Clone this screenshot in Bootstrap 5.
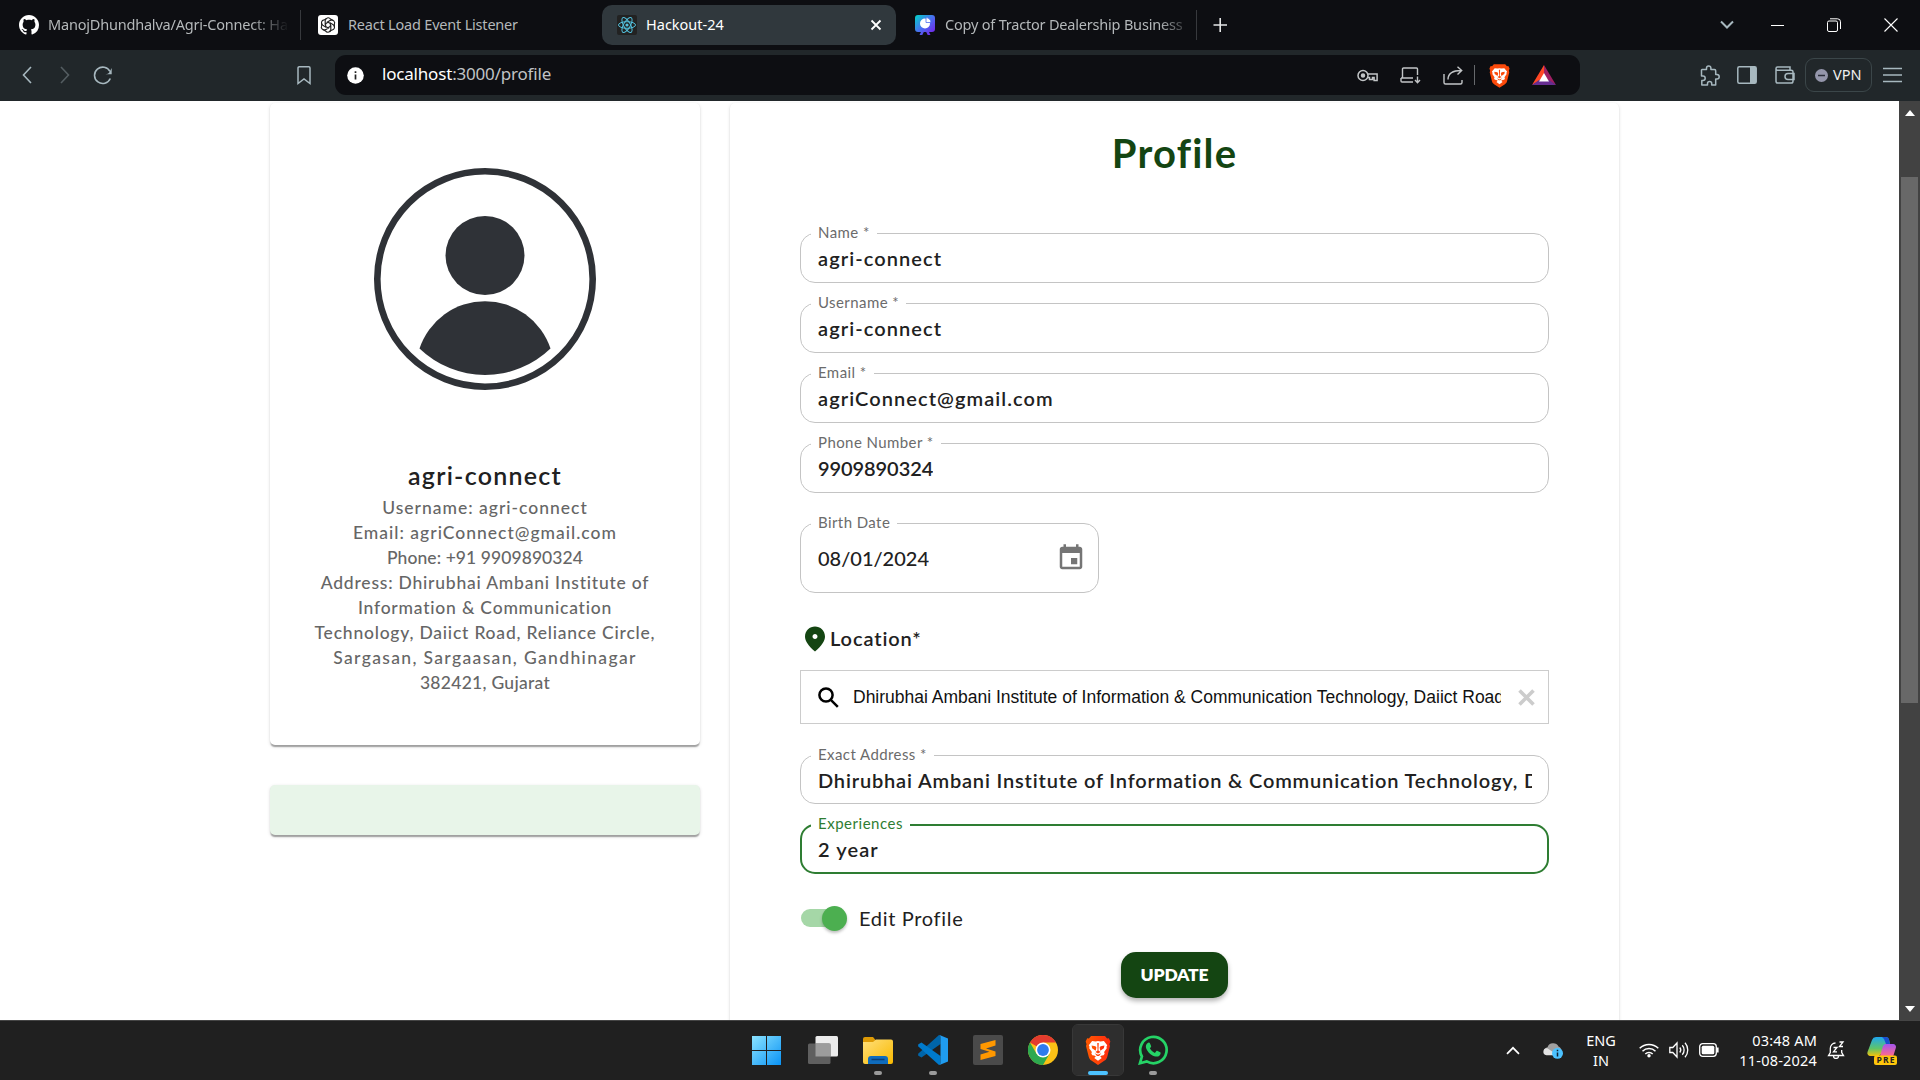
<!DOCTYPE html>
<html lang="en">
<head>
<meta charset="utf-8">
<meta name="viewport" content="width=device-width, initial-scale=1">
<title>Hackout-24</title>
<link href="https://cdn.jsdelivr.net/npm/bootstrap@5.3.0/dist/css/bootstrap.min.css" rel="stylesheet">
<style>
  html, body { height: 100%; overflow: hidden; }
  body { background: #fff; font-family: "Noto Sans", sans-serif; color: #212121; }
  svg { display: block; flex: none; }
  .screen { width: 1920px; height: 1080px; }

  /* browser chrome */
  .tabstrip { height: 50px; background: #0d0e12; padding-left: 9px; font-size: 14.5px; color: #b4b8ba; letter-spacing: -.2px; }
  .tab-item { height: 40px; width: 294px; padding: 0 10px; }
  .tab-item.first { width: 291px; }
  .tab-item.last { width: 300px; padding-left: 19px; }
  .tab-item.current { background: #30383d; border-radius: 10px; color: #fff; padding-left: 15px; margin-left: 7px; letter-spacing: 0; }
  .tab-title { overflow: hidden; white-space: nowrap; margin-left: 9px; }
  .tab-title.faded { width: 241px; -webkit-mask-image: linear-gradient(90deg, #000 84%, transparent); mask-image: linear-gradient(90deg, #000 84%, transparent); }
  .last .tab-title.faded { width: 238px; margin-left: 10px; -webkit-mask-image: linear-gradient(90deg, #000 90%, rgba(0,0,0,.3)); mask-image: linear-gradient(90deg, #000 90%, rgba(0,0,0,.3)); }
  .tab-rule { width: 1px; height: 30px; background: #37393d; }
  .win-btns { padding-right: 1px; }
  .win-btn { width: 56.5px; height: 48px; }
  .win-btn.narrow { width: 46px; }
  .toolbar-row { height: 51px; background: #21272a; padding-bottom: 1px; }
  .tool-btn { width: 38px; height: 40px; }
  .omnibox { width: 1245px; height: 40px; background: #0d0e12; border-radius: 11px; font-size: 17px; color: #c0c3c5; letter-spacing: -.19px; }
  .url-text { margin: -2px 0 0 18px; }
  .omni-icons { padding-right: 24px; gap: 22px; }
  .omni-rule { width: 1px; height: 20px; background: #66696c; margin: 0 -8px 0 -12px; }
  .ext-icons { margin-left: 120px; width: 220px; }
  .vpn-pill { width: 67px; height: 34px; border: 1px solid #3b4649; border-radius: 9px; font-size: 14.5px; color: #f0f0f0; margin-left: 10px; padding-left: 9px; gap: 5px; }

  /* page */
  .viewport-area { height: 919px; font-family: Lato, sans-serif; }
  .page-body { padding: 2px 0 0 270px; gap: 30px; }
  .side-col { width: 430px; gap: 40px; }
  .paper { background: #fff; border-radius: 5px; box-shadow: 0 2.5px 1.25px -1.25px rgba(0,0,0,.2), 0 1.25px 1.25px rgba(0,0,0,.14), 0 1.25px 3.75px rgba(0,0,0,.12); }
  .paper.summary { height: 642px; padding: 65px 40px 0; }
  .paper.notice { height: 50px; background: #e8f5e9; }
  .paper.form-paper { width: 889px; height: 1000px; padding: 25px 70px 0; }
  .user-name { font-size: 25px; line-height: 40px; font-weight: 600; margin-top: 65px; letter-spacing: 1.26px; }
  .user-lines { font-size: 17.5px; line-height: 25px; font-weight: 500; color: #666; letter-spacing: .78px; }
  .track-0 { letter-spacing: .07px; }
  .track-1 { letter-spacing: .28px; }
  .track-3 { letter-spacing: 1px; }
  .track-4 { letter-spacing: 1.35px; }
  .page-title { font-size: 40px; line-height: 50px; font-weight: 700; color: #144512; margin-bottom: 55px; letter-spacing: 1.2px; }
  .field-box { height: 50px; border: 1px solid #c4c4c4; border-radius: 15px; padding: 0 16px 0 17px; font-size: 20px; font-weight: 600; margin-bottom: 20px; letter-spacing: 1.08px; }
  .field-box > .field-label { position: absolute; top: -13px; left: 10px; padding: 0 7px; background: #fff; font-size: 15px; line-height: 22px; font-weight: 400; color: #6b6b6b; white-space: nowrap; letter-spacing: .42px; }
  .field-box.numeric { letter-spacing: -.08px; }
  .field-box.address { height: 49px; letter-spacing: .83px; }
  .field-box.focused { border: 2px solid #2e7d32; padding: 0 15px 0 16px; }
  .field-box.focused > .field-label { color: #2e7d32; top: -14px; left: 9px; letter-spacing: .52px; }
  .field-box.date-box { width: 299px; height: 70px; margin: 30px 0 31px; font-weight: 500; letter-spacing: 0; }
  .date-box svg { margin-right: -4px; }
  .field-value { overflow: hidden; white-space: nowrap; }
  .loc-title { height: 30px; font-size: 20px; line-height: 28px; font-weight: 600; margin-bottom: 16px; letter-spacing: .89px; }
  .loc-title span { margin-top: -3px; }
  .search-box { height: 54px; border: 1px solid #ccc; padding: 0 13px 0 17px; font: 17.5px "Liberation Sans", sans-serif; color: #111; margin-bottom: 31px; }
  .search-box .field-value { width: 648px; margin-left: 14px; }
  .switch-row { margin: 29px 0 19px; padding-left: 1px; font-size: 20px; gap: 14px; letter-spacing: .67px; }
  .switch-track { width: 44px; height: 18px; border-radius: 9px; background: #a5d7a7; }
  .switch-thumb { width: 25px; height: 25px; border-radius: 50%; background: #4caf50; box-shadow: 0 2px 3px rgba(0,0,0,.25); margin-right: -2px; }
  .btn-update { width: 107px; height: 46px; border-radius: 15px; background: #144512; color: #fff; font-size: 17.5px; font-weight: 800; letter-spacing: -.2px; box-shadow: 0 3px 5px rgba(0,0,0,.3); }
  .scroll-rail { width: 21px; background: #424242; padding: 9px 0 8px; }
  .scroll-grip { width: 17px; height: 526px; background: #686868; margin-top: 61px; }

  /* taskbar */
  .taskbar { height: 60px; background: #202020; border-top: 1px solid #454545; color: #fff; padding-bottom: 1px; }
  .task-apps { margin-left: 742px; gap: 5px; }
  .task-app { width: 50px; height: 50px; border-radius: 5px; }
  .task-app.start { width: 51px; padding-right: 2px; }
  .task-app.current { background: #2e2e2e; outline: 1px solid #383838; }
  .run-dot { position: absolute; bottom: 0; width: 8px; height: 4px; border-radius: 2px; background: #9a9a9a; }
  .current > .run-dot { width: 20px; background: #4cc2ff; }
  .tray { width: 414px; }
  .tray-text { font-size: 14.5px; line-height: 20px; letter-spacing: .2px; }
  .tray-lang { width: 76px; letter-spacing: 0; }
  .tray-clock { width: 98px; }
</style>
<script src="https://cdn.jsdelivr.net/npm/bootstrap@5.3.0/dist/js/bootstrap.bundle.min.js"></script>
</head>
<body>
<svg width="0" height="0" class="position-absolute">
  <defs>
    <linearGradient id="gWin" x1="0" y1="0" x2="1" y2="1"><stop offset="0" stop-color="#8be3ff"/><stop offset="1" stop-color="#0a93f5"/></linearGradient>
    <linearGradient id="gFold" x1="0" y1="0" x2="1" y2="1"><stop offset="0" stop-color="#ffdf7a"/><stop offset="1" stop-color="#f9b900"/></linearGradient>
    <linearGradient id="gBrave" x1="0" y1="0" x2="1" y2="0"><stop offset="0" stop-color="#ff5a00"/><stop offset="1" stop-color="#ff2a10"/></linearGradient>
    <linearGradient id="gPres" x1="0" y1="0" x2="1" y2="1"><stop offset="0" stop-color="#00d5c8"/><stop offset=".5" stop-color="#4a6df0"/><stop offset="1" stop-color="#7a18e8"/></linearGradient>
    <linearGradient id="gCopA" x1="0" y1="0" x2="0" y2="1"><stop offset="0" stop-color="#1ea7f0"/><stop offset=".6" stop-color="#5fc46a"/><stop offset="1" stop-color="#f2c30b"/></linearGradient>
    <linearGradient id="gCopB" x1="0" y1="0" x2="0" y2="1"><stop offset="0" stop-color="#a455f0"/><stop offset="1" stop-color="#ff6a8a"/></linearGradient>
    <symbol id="lion" viewBox="0 0 24 28">
      <path d="M5.500 1h13l2 2.300 1.600-.2 1.400 3-.8 2.600.5 1.500-2.600 10.300c-.4 1.500-1.200 2.500-2.400 3.400L12 28l-6.200-4.100c-1.200-.9-2-1.900-2.400-3.400L.8 10.200l.5-1.500-.8-2.600 1.400-3 1.600.2z"/>
      <path fill="#fff" d="M12 5.600l2.300.5 3.200-.5 3.100 3.900-.7 1.500.3 1.300-2.500 3.600.5 1.700-1 1.300-1.700.3-1.500.8 1.500 1.400-3.500 2.600-3.500-2.600L10 20l-1.500-.8-1.700-.3-1-1.300.5-1.700-2.500-3.600.3-1.300-.7-1.500 3.100-3.900 3.200.5z"/>
      <path d="M6 9.800l3.600.6.9 1.300-.7 3-3.300-2.300zM18 9.800l-3.600.6-.9 1.300.7 3 3.300-2.300zM11.300 7.500h1.400l-.3 7 2 1.300-2.400 1.400-2.400-1.400 2-1.300zM9 17l3 1.500 3-1.500-2 2.500h-2z"/>
    </symbol>
  </defs>
</svg>

<div class="screen d-flex flex-column">
  <header class="tabstrip d-flex align-items-center">
    <div class="tab-item first d-flex align-items-center">
      <svg width="20" height="20" viewBox="0 0 16 16" fill="#fff"><path d="M8 0C3.580 0 0 3.580 0 8c0 3.540 2.290 6.530 5.470 7.590.4.070.55-.17.55-.38 0-.19-.01-.82-.01-1.490-2.010.37-2.530-.49-2.690-.94-.09-.23-.48-.94-.82-1.130-.28-.15-.68-.52-.01-.53.63-.01 1.080.58 1.230.82.72 1.210 1.870.87 2.330.66.07-.52.28-.87.51-1.070-1.780-.2-3.640-.89-3.640-3.950 0-.87.31-1.590.82-2.150-.08-.2-.36-1.020.08-2.120 0 0 .67-.21 2.200.82.64-.18 1.320-.27 2-.27s1.360.09 2 .27c1.530-1.040 2.200-.82 2.200-.82.44 1.100.16 1.920.08 2.120.51.56.82 1.270.82 2.150 0 3.070-1.870 3.750-3.650 3.950.29.25.54.73.54 1.480 0 1.070-.01 1.930-.01 2.200 0 .21.15.46.55.38A8.010 8.010 0 0 0 16 8c0-4.420-3.580-8-8-8z"/></svg>
      <div class="tab-title faded">ManojDhundhalva/Agri-Connect: Hack</div>
    </div>
    <div class="tab-rule"></div>
    <div class="tab-item d-flex align-items-center ps-3">
      <svg width="22" height="20" viewBox="0 0 22 20"><rect x="1" width="20" height="20" rx="3" fill="#fff"/><g fill="none" stroke="#222" stroke-width="1.150"><path id="petal" d="M11 7.200L8.200 8.900V5.600a2.900 2.900 0 0 1 5.300-1.500l2.500 1.500"/><use href="#petal" transform="rotate(60 11 10)"/><use href="#petal" transform="rotate(120 11 10)"/><use href="#petal" transform="rotate(180 11 10)"/><use href="#petal" transform="rotate(240 11 10)"/><use href="#petal" transform="rotate(300 11 10)"/></g></svg>
      <div class="tab-title">React Load Event Listener</div>
    </div>
    <div class="tab-item current d-flex align-items-center">
      <svg width="20" height="20" viewBox="0 0 20 20"><rect width="20" height="20" rx="2" fill="#222"/><g fill="none" stroke="#53c1de"><ellipse cx="10" cy="10" rx="8.500" ry="3.300"/><ellipse cx="10" cy="10" rx="8.500" ry="3.300" transform="rotate(60 10 10)"/><ellipse cx="10" cy="10" rx="8.500" ry="3.300" transform="rotate(120 10 10)"/></g><circle cx="10" cy="10" r="1.600" fill="#53c1de"/></svg>
      <div class="tab-title flex-grow-1">Hackout-24</div>
      <svg width="20" height="20" viewBox="0 0 20 20" stroke="#fff" stroke-width="1.800"><path d="M5.500 5.500l9 9M14.500 5.500l-9 9"/></svg>
    </div>
    <div class="tab-item last d-flex align-items-center">
      <svg width="20" height="20" viewBox="0 0 20 20"><path fill="url(#gPres)" d="M3 0h14a3 3 0 0 1 3 3v11a3 3 0 0 1-3 3h-3l1.500 3h-2.800L11.200 17H8.800l-1.500 3H4.500L6 17H3a3 3 0 0 1-3-3V3a3 3 0 0 1 3-3z"/><circle cx="10" cy="8.500" r="5" fill="#fff"/><path d="M11 7.500V2.600a5 5 0 0 1 5 4.900z" fill="#fff" stroke="#4a6df0" stroke-width=".8"/></svg>
      <div class="tab-title faded">Copy of Tractor Dealership Business</div>
    </div>
    <div class="tab-rule"></div>
    <svg width="48" height="20" viewBox="0 0 48 20" stroke="#e4e6e7" stroke-width="1.600"><path d="M16.500 10h13.500M23.200 3v14"/></svg>
    <div class="win-btns ms-auto d-flex align-items-center">
      <div class="win-btn narrow d-flex align-items-center justify-content-center"><svg width="14" height="10" viewBox="0 0 14 10" fill="none" stroke="#a7b8bf" stroke-width="2"><path d="M1 1.500l6 6 6-6"/></svg></div>
      <div class="win-btn d-flex align-items-center justify-content-center"><svg width="13" height="13" stroke="#fff"><path d="M0 6.500h13"/></svg></div>
      <div class="win-btn d-flex align-items-center justify-content-center"><svg width="14" height="14" viewBox="0 0 14 14" fill="none" stroke="#fff"><rect x=".5" y="3" width="10" height="10.500" rx="1.500"/><path d="M3 .8h7.500a3 3 0 0 1 3 3V11"/></svg></div>
      <div class="win-btn d-flex align-items-center justify-content-center"><svg width="14" height="14" viewBox="0 0 14 14" stroke="#fff" stroke-width="1.100"><path d="M.5.5l13 13M13.500.5l-13 13"/></svg></div>
    </div>
  </header>

  <div class="toolbar-row d-flex align-items-center">
    <div class="d-flex ps-2">
      <div class="tool-btn d-flex align-items-center justify-content-center"><svg width="10" height="18" viewBox="0 0 10 18" fill="none" stroke="#a7b8bf" stroke-width="1.600"><path d="M9 1L1.500 9 9 17"/></svg></div>
      <div class="tool-btn d-flex align-items-center justify-content-center"><svg width="10" height="18" viewBox="0 0 10 18" fill="none" stroke="#545d61" stroke-width="1.600"><path d="M1 1l7.500 8L1 17"/></svg></div>
      <div class="tool-btn d-flex align-items-center justify-content-center"><svg width="20" height="20" viewBox="0 0 20 20" fill="none" stroke="#a7b8bf" stroke-width="1.600"><path d="M17.300 13.500A8.200 8.200 0 1 1 17 6.500"/><path d="M18.700 3v6.200h-6.200c2 0 2.800-.6 3.700-1.700z" fill="#a7b8bf" stroke="none"/></svg></div>
    </div>
    <div class="ms-auto me-4 d-flex align-items-center"><svg width="14" height="19" viewBox="0 0 14 19" fill="none" stroke="#a7b8bf" stroke-width="1.500"><path d="M1 2a1.200 1.200 0 0 1 1.200-1.200h9.600A1.200 1.200 0 0 1 13 2v15.500L7 13l-6 4.500z"/></svg></div>
    <div class="omnibox d-flex align-items-center">
      <svg class="ms-2 me-0" width="21" height="17" viewBox="-4 0 21 17"><circle cx="8.500" cy="8.500" r="8.300" fill="#fff"/><path d="M8.500 7.500v5M8.500 4.200v1.700" stroke="#222" stroke-width="1.700"/></svg>
      <div class="url-text"><span class="text-white">localhost</span>:3000/profile</div>
      <div class="omni-icons ms-auto d-flex align-items-center">
        <svg width="21" height="15" viewBox="0 0 21 15" fill="none" stroke="#c2c5c7" stroke-width="1.500"><circle cx="6" cy="7.500" r="5"/><circle cx="6" cy="7.500" r="1.500" fill="#c2c5c7"/><path d="M10.800 6h9.300v6.500h-3V9.500h-1.600v2h-3v-2h-2"/></svg>
        <svg width="21" height="17" viewBox="0 0 21 17" fill="none" stroke="#c2c5c7" stroke-width="1.400"><path d="M2.500 10.500V2A1 1 0 0 1 3.500 1h13a1 1 0 0 1 1 1v6M1 11h12M1 11v3a1 1 0 0 0 1 1h11M17.500 9.500v6M15 13l2.500 2.700L20 13"/></svg>
        <svg width="21" height="19" viewBox="0 0 21 19" fill="none" stroke="#c2c5c7" stroke-width="1.400"><path d="M1 8v8.500A1.500 1.500 0 0 0 2.500 18h15a1.500 1.500 0 0 0 1.500-1.500V14M5 13.500C5 8 9 4.500 18.500 4.500M14.500.7l4.200 3.800-4.200 4"/></svg>
        <div class="omni-rule"></div>
        <svg width="21" height="25" fill="#fb4a0b"><use href="#lion"/></svg>
        <svg width="24" height="20" viewBox="0 0 24 20"><path d="M12 0L0 20l12-7z" fill="#ff4724"/><path d="M12 0l12 20-12-7z" fill="#9e1f63"/><path d="M0 20h24l-7-5H7z" fill="#662d91"/><path d="M12 8l-5 8.500h10z" fill="#fff"/></svg>
      </div>
    </div>
    <div class="ext-icons d-flex align-items-center">
      <svg width="20" height="21" viewBox="0 0 20 21" fill="none" stroke="#a7b8bf" stroke-width="1.500" stroke-linejoin="round"><path d="M2 4.500h4.500V3.200a2.200 2.200 0 0 1 4.400 0v1.300h3.600a1.200 1.200 0 0 1 1.200 1.200v3.700h1.200a2.300 2.300 0 0 1 0 4.600h-1.200V20h-4v-1.500a2.100 2.100 0 0 0-4.200 0V20H1.800v-4.500H3a2.200 2.200 0 0 0 0-4.400H1.500V5z"/></svg>
      <svg class="ms-3" width="21" height="18" viewBox="-1 0 21 18"><rect x=".8" y=".8" width="18.400" height="16.400" rx="1.500" fill="none" stroke="#a7b8bf" stroke-width="1.500"/><path d="M13 1h6v16h-6z" fill="#a7b8bf"/></svg>
      <svg class="ms-3" width="22" height="18" viewBox="-2 0 22 18" fill="none" stroke="#a7b8bf" stroke-width="1.500"><path d="M1 2.500v12.700c0 1 .6 1.800 1.800 1.800h13.400c1 0 1.800-.6 1.800-1.800V5.800c0-1-.7-1.600-1.800-1.600H2.500C.5 4.200.5 1 2.500 1H15v3M19 7.500h-6a2.500 2.500 0 0 0 0 6h6z"/></svg>
      <div class="vpn-pill d-flex align-items-center"><svg width="13" height="13" viewBox="0 0 13 13"><circle cx="6.500" cy="6.500" r="6.500" fill="#9496ab"/><path d="M3 6.500h7" stroke="#2a2d3a" stroke-width="1.500"/></svg><span>VPN</span></div>
      <svg class="ms-2" width="22" height="16" viewBox="-3 0 22 16" stroke="#a7b8bf" stroke-width="1.500"><path d="M0 1.500h19M0 8h19M0 14.500h19"/></svg>
    </div>
  </div>

  <div class="viewport-area d-flex overflow-hidden">
    <main class="page-body d-flex flex-grow-1 align-items-start">
      <aside class="side-col d-flex flex-column">
        <section class="paper summary text-center">
          <svg class="mx-auto" width="222" height="222" viewBox="0 0 222 222" fill="#2f3237"><circle cx="111" cy="111" r="107.700" fill="none" stroke="#2f3237" stroke-width="6.600"/><circle cx="111" cy="87.500" r="39.500"/><path d="M45.500 180.500a69 69 0 0 1 131 0a94.200 94.200 0 0 1-131 0z"/></svg>
          <div class="user-name">agri-connect</div>
          <div class="user-lines">
            <span class="track-3">Username: agri-connect</span><br>
            <span class="track-3">Email: agriConnect@gmail.com</span><br>
            <span class="track-0">Phone: +91 9909890324</span><br>
            Address: Dhirubhai Ambani Institute of<br>
            Information &amp; Communication<br>
            Technology, Daiict Road, Reliance Circle,<br>
            <span class="track-4">Sargasan, Sargaasan, Gandhinagar</span><br>
            <span class="track-1">382421, Gujarat</span>
          </div>
        </section>
        <section class="paper notice"></section>
      </aside>

      <section class="paper form-paper">
        <h1 class="page-title text-center">Profile</h1>
        <div class="field-box position-relative d-flex align-items-center"><label class="field-label">Name *</label><div class="field-value">agri-connect</div></div>
        <div class="field-box position-relative d-flex align-items-center"><label class="field-label">Username *</label><div class="field-value">agri-connect</div></div>
        <div class="field-box position-relative d-flex align-items-center"><label class="field-label">Email *</label><div class="field-value">agriConnect@gmail.com</div></div>
        <div class="field-box numeric position-relative d-flex align-items-center"><label class="field-label">Phone Number *</label><div class="field-value">9909890324</div></div>
        <div class="field-box date-box position-relative d-flex align-items-center justify-content-between"><label class="field-label">Birth Date</label><div class="field-value">08/01/2024</div>
          <svg width="30" height="30" viewBox="0 0 24 24" fill="#757575"><path d="M17 12h-5v5h5v-5zM16 1v2H8V1H6v2H5c-1.110 0-1.990.9-1.990 2L3 19c0 1.100.89 2 2 2h14c1.100 0 2-.9 2-2V5c0-1.100-.9-2-2-2h-1V1h-2zm3 18H5V8h14v11z"/></svg>
        </div>
        <div class="loc-title d-flex align-items-center"><svg width="30" height="30" viewBox="0 0 24 24" fill="#144512"><path d="M12 2c-4.200 0-8 3.220-8 8.200 0 3.320 2.670 7.250 8 11.800 5.330-4.550 8-8.480 8-11.800C20 5.220 16.200 2 12 2zm0 10c-1.100 0-2-.9-2-2s.9-2 2-2 2 .9 2 2-.9 2-2 2z"/></svg><span>Location*</span></div>
        <div class="search-box d-flex align-items-center">
          <svg width="21" height="21" viewBox="0 0 21 21" fill="none" stroke="#000" stroke-width="2.500"><circle cx="8" cy="8" r="6.600"/><path d="M12.800 12.800l7 7"/></svg>
          <div class="field-value">Dhirubhai Ambani Institute of Information &amp; Communication Technology, Daiict Road, Reliance Circle</div>
          <svg class="ms-auto" width="17" height="17" viewBox="0 0 17 17" stroke="#ccc" stroke-width="3.600"><path d="M1.500 1.500l14 14M15.500 1.500l-14 14"/></svg>
        </div>
        <div class="field-box address position-relative d-flex align-items-center"><label class="field-label">Exact Address *</label><div class="field-value">Dhirubhai Ambani Institute of Information &amp; Communication Technology, Daiict Road</div></div>
        <div class="field-box focused position-relative d-flex align-items-center"><label class="field-label">Experiences</label><div class="field-value">2 year</div></div>
        <div class="switch-row d-flex align-items-center"><div class="switch-track d-flex align-items-center justify-content-end"><div class="switch-thumb"></div></div><span>Edit Profile</span></div>
        <div class="text-center"><button class="btn btn-update p-0 border-0">UPDATE</button></div>
      </section>
    </main>
    <div class="scroll-rail d-flex flex-column align-items-center">
      <svg width="10" height="6" fill="#fff"><path d="M5 0l5 6H0z"/></svg>
      <div class="scroll-grip"></div>
      <svg class="mt-auto" width="10" height="6" fill="#fff"><path d="M0 0h10L5 6z"/></svg>
    </div>
  </div>

  <footer class="taskbar d-flex align-items-center">
    <div class="task-apps d-flex">
      <div class="task-app start d-flex align-items-center justify-content-center"><svg width="29" height="29" fill="url(#gWin)"><path d="M0 0h14v14H0zM15 0h14v14H15zM0 15h14v14H0zM15 15h14v14H15z"/></svg></div>
      <div class="task-app d-flex align-items-center justify-content-center"><svg width="30" height="28"><rect x="7.500" width="22.500" height="20.500" rx="1.500" fill="#ececec"/><rect y="7.500" width="22.500" height="20.500" rx="1.500" fill="#5f5f5f"/><path d="M7.500 7.500H22.500V20.500H7.500z" fill="#9c9c9c"/></svg></div>
      <div class="task-app position-relative d-flex align-items-center justify-content-center"><svg width="30" height="27"><path d="M0 2a2 2 0 0 1 2-2h8l3 3.500V9H0z" fill="#dd9a05"/><path d="M0 5h10l3-2.500h15a2 2 0 0 1 2 2V25a2 2 0 0 1-2 2H2a2 2 0 0 1-2-2z" fill="url(#gFold)"/><path d="M5 27v-5a3 3 0 0 1 3-3h14a3 3 0 0 1 3 3v5z" fill="#0f6cbd"/><path d="M8.500 22.500h13" stroke="#0a3f77" stroke-width="1.500"/></svg><i class="run-dot"></i></div>
      <div class="task-app position-relative d-flex align-items-center justify-content-center"><svg width="30" height="30" viewBox="0 0 30 30"><path d="M22.500 9L3.500 22.500.4 20.800C0 20 0 19 .4 18.500L21 0l1.500 1z" fill="#0065a9"/><path d="M22.500 21L3.500 7.500.4 9.200c-.4.800-.4 1.800 0 2.300L21 30l1.500-1z" fill="#007acc"/><path d="M21.500 0L30 3.500v23L21.500 30c-.7 0 1-.5 1-2V2c0-1.500-1.700-2-1-2z" fill="#1f9cf0"/></svg><i class="run-dot"></i></div>
      <div class="task-app d-flex align-items-center justify-content-center"><svg width="30" height="30"><rect width="30" height="30" rx="2" fill="#4a4a4a"/><path d="M22.500 5v5.500L13 13.500l9.500 3V21L7.500 25v-5.500l9-2.700-9-2.800V9z" fill="#ff9800"/></svg></div>
      <div class="task-app d-flex align-items-center justify-content-center"><svg width="30" height="30" viewBox="0 0 30 30"><circle cx="15" cy="15" r="15" fill="#fbc116"/><path d="M15 15L2 7.500A15 15 0 0 1 28 7.500H15z" fill="#e33b2e"/><path d="M2 7.500A15 15 0 0 0 15 30l6.500-11.200L8.500 18.800z" fill="#2da94f"/><circle cx="15" cy="15" r="7.500" fill="#fff"/><circle cx="15" cy="15" r="5.900" fill="#2f7bee"/></svg></div>
      <div class="task-app current position-relative d-flex align-items-center justify-content-center"><svg width="26" height="30" fill="url(#gBrave)"><use href="#lion"/></svg><i class="run-dot"></i></div>
      <div class="task-app position-relative d-flex align-items-center justify-content-center"><svg width="30" height="30" viewBox="0 0 30 30"><path d="M2 28.200l1.900-6.700A13.200 13.200 0 1 1 8.700 26.400z" fill="none" stroke="#25d366" stroke-width="2.700"/><path d="M10.300 7.800c.6-.4 1.300-.2 1.600.4l1.200 2.700c.2.500 0 .9-1.200 2.300 1.100 2.200 2.700 3.700 5 4.700l1.500-1.800c.4-.4.8-.4 1.200-.2l2.600 1.300c.5.300.5.600.4 1.200-.3 1.900-1.900 3.100-3.700 3.200-3.500 0-7.200-2.600-9.300-5.700-2.700-3.700-2-6.700.7-8.100z" fill="#25d366"/></svg><i class="run-dot"></i></div>
    </div>
    <div class="tray ms-auto d-flex align-items-center">
      <svg width="14" height="9" viewBox="0 0 14 9" fill="none" stroke="#fff" stroke-width="1.700"><path d="M1 7.800l6-6 6 6"/></svg>
      <svg class="ms-3" width="27" height="17" viewBox="-7 0 27 17"><path d="M4 13a4 4 0 0 1 .5-7.800A6 6 0 0 1 15.500 4.500 4.500 4.500 0 0 1 15 13z" fill="#a0a0a0"/><path d="M3.500 13.200a3.500 3.500 0 0 1 .8-7L10 10v3.200z" fill="#e2e2e2"/><circle cx="14.500" cy="11.300" r="5.500" fill="#4cc2ff"/><path d="M14.500 10.500v4M14.500 7.800v1.500" stroke="#123" stroke-width="1.500"/></svg>
      <div class="tray-text tray-lang text-center">ENG<br>IN</div>
      <svg width="20" height="15" viewBox="0 0 20 15" fill="none" stroke="#fff" stroke-width="1.500"><path d="M.7 5.300a13.200 13.200 0 0 1 18.600 0M3.500 8.200a9.200 9.200 0 0 1 13 0M6.300 11a5.200 5.200 0 0 1 7.400 0"/><circle cx="10" cy="12.800" r="1.700" fill="#fff" stroke="none"/></svg>
      <svg class="ms-2" width="22" height="18" viewBox="-2 0 22 18" fill="none" stroke="#fff" stroke-width="1.300"><path d="M.8 6.500h3L8 2v14l-4.200-4.500h-3zM10.800 6.500a4 4 0 0 1 0 5M13.300 4.200a7.300 7.300 0 0 1 0 9.600M16 1.800a10.800 10.800 0 0 1 0 14.400"/></svg>
      <svg class="ms-2" width="22" height="14" viewBox="-2 0 22 14"><rect x=".7" y=".7" width="16.600" height="12.600" rx="3" fill="none" stroke="#fff" stroke-width="1.300"/><rect x="2.700" y="2.700" width="12.600" height="8.600" rx="1.500" fill="#fff"/><path d="M18.600 4.500v5" stroke="#fff" stroke-width="2"/></svg>
      <div class="tray-text tray-clock text-end">03:48 AM<br>11-08-2024</div>
      <svg class="ms-2" width="20" height="18" viewBox="-2 0 20 18" fill="none" stroke="#fff" stroke-width="1.300"><path d="M8.500 2C5.500 2 3.300 4.500 3.300 7.500v4L1.500 14.500h15l-1.800-3V9M6.500 15a2.500 2.500 0 0 0 5 0M6.500 6.500H10l-3.500 4.300H10M12.500 1H16l-3.500 4.500H16"/></svg>
      <svg class="ms-3" width="36" height="29" viewBox="-6 0 36 29"><path d="M9 1h10a3 3 0 0 1 3 2.500L23 8h-4l-4 9-3 3H3.500a3 3 0 0 1-3-4L5 4a4.500 4.500 0 0 1 4-3z" fill="url(#gCopA)"/><path d="M15 1h4a3 3 0 0 1 3 2.500L23 8h-4l-2-5z" fill="#1b4fd0"/><path d="M18 8h8a3 3 0 0 1 2.800 4l-2.500 8H13l3-10z" fill="url(#gCopB)"/><rect x="7" y="19.500" width="23" height="9.500" rx="2" fill="#ffc60b"/><text x="9.500" y="27.300" font-family="Open Sans" font-weight="700" font-size="8.500" fill="#222" textLength="18">PRE</text></svg>
    </div>
  </footer>
</div>
</body>
</html>
